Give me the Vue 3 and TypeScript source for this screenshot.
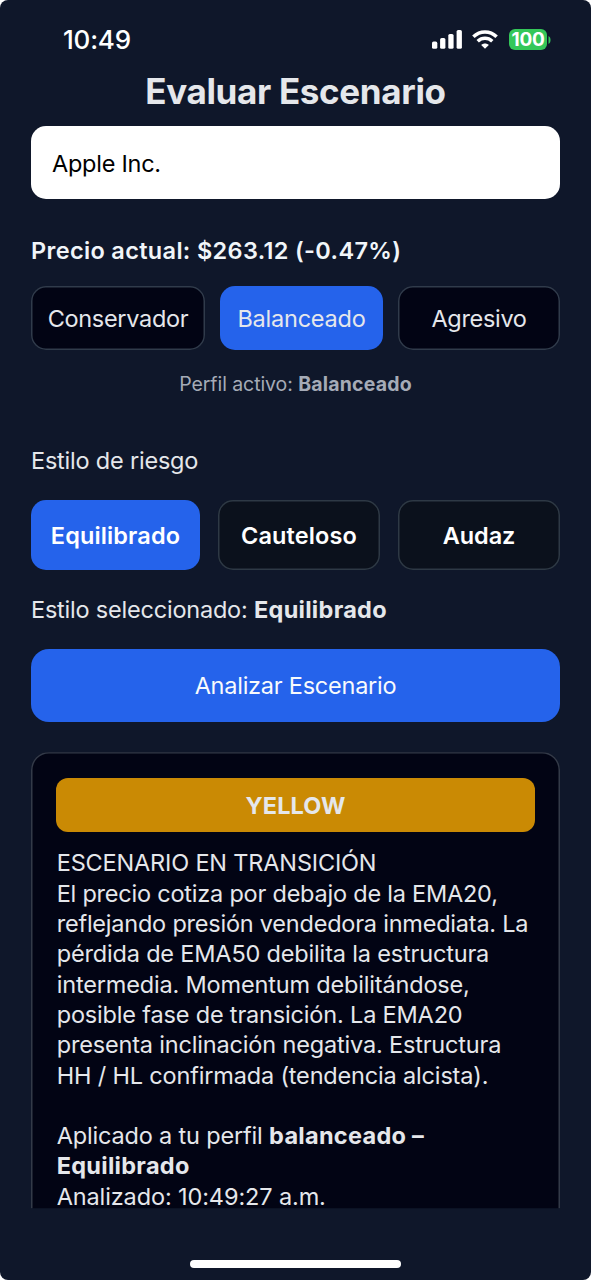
<script setup lang="ts">
import { ref } from 'vue'

interface Option {
  label: string
  key: string
}

const company = ref<string>('Apple Inc.')
const profiles: Option[] = [
  { label: 'Conservador', key: 'conservador' },
  { label: 'Balanceado', key: 'balanceado' },
  { label: 'Agresivo', key: 'agresivo' },
]
const styles: Option[] = [
  { label: 'Equilibrado', key: 'equilibrado' },
  { label: 'Cauteloso', key: 'cauteloso' },
  { label: 'Audaz', key: 'audaz' },
]
const profile = ref<string>('Balanceado')
const riskStyle = ref<string>('Equilibrado')

const summary: string[] = [
  'ESCENARIO EN TRANSICIÓN',
  'El precio cotiza por debajo de la EMA20,',
  'reflejando presión vendedora inmediata. La',
  'pérdida de EMA50 debilita la estructura',
  'intermedia. Momentum debilitándose,',
  'posible fase de transición. La EMA20',
  'presenta inclinación negativa. Estructura',
  'HH / HL confirmada (tendencia alcista).',
]
</script>

<template>
  <div class="device">
    <main class="screen">
      <header class="status">
        <span class="time">10:49</span>
        <div class="indicators">
          <svg class="signal" width="30" height="19" viewBox="0 0 30 19" fill="#fff">
            <rect x="0" y="11.6" width="5.3" height="7.2" rx="1.6" />
            <rect x="8.1" y="8" width="5.3" height="10.8" rx="1.6" />
            <rect x="16.3" y="4" width="5.3" height="14.8" rx="1.6" />
            <rect x="24.6" y="0" width="5.3" height="18.8" rx="1.6" />
          </svg>
          <svg class="wifi" width="26" height="19" viewBox="0 0 26 19" fill="none" stroke="#fff">
            <path d="M1.4 6.7C8 .4 18 .4 24.6 6.7" stroke-width="3.6" />
            <path d="M5.7 11.2C10 7.3 16 7.3 20.3 11.2" stroke-width="3.5" />
            <path d="M13 18.8 9.2 14.9C11.3 12.9 14.7 12.9 16.8 14.9Z" fill="#fff" stroke="none" />
          </svg>
          <div class="battery"><span>100</span></div>
          <svg class="nub" width="3" height="8" viewBox="0 0 3 8"><path d="M.5 0C3.2 1.3 3.2 6.7.5 8Z" fill="#34c759" /></svg>
        </div>
      </header>

      <h1 class="title">Evaluar Escenario</h1>
      <div class="field"><span class="company">{{ company }}</span></div>
      <p class="price">Precio actual: $263.12 (-0.47%)</p>

      <div class="profiles">
        <button
          v-for="item in profiles"
          :key="item.key"
          :class="['chip', item.key, { active: item.label === profile }]"
          @click="profile = item.label"
        ><span>{{ item.label }}</span></button>
      </div>
      <p class="profile-note">Perfil activo: <b>{{ profile }}</b></p>

      <p class="style-label">Estilo de riesgo</p>
      <div class="styles">
        <button
          v-for="item in styles"
          :key="item.key"
          :class="['option', item.key, { active: item.label === riskStyle }]"
          @click="riskStyle = item.label"
        ><span>{{ item.label }}</span></button>
      </div>
      <p class="style-note">Estilo seleccionado: <b>{{ riskStyle }}</b></p>

      <button class="analyze"><span>Analizar Escenario</span></button>

      <section class="card">
        <div class="badge"><span>YELLOW</span></div>
        <div class="report">
          <p v-for="(line, i) in summary" :key="i" :class="['line', { tight: i === 1 || i === 2 }]">{{ line }}</p>
          <p class="line gap">Aplicado a tu perfil <b>balanceado –</b></p>
          <p class="line"><b>Equilibrado</b></p>
          <p class="line analyzed">Analizado: 10:49:27 a.m.</p>
        </div>
      </section>
      <footer class="bottom"><div class="home"></div></footer>
    </main>
  </div>
</template>

<style>
html,
body {
  margin: 0;
  background: #fff;
  overflow: hidden;
}
</style>

<style scoped>
* {
  box-sizing: border-box;
}
.device {
  width: 591px;
  height: 1280px;
  background: #fff;
}
.screen {
  display: flex;
  flex-direction: column;
  width: 591px;
  height: 1280px;
  padding: 0 31px;
  overflow: hidden;
  border-radius: 8px;
  background: #0f172a;
  color: #e5e7eb;
  font-family: Inter, 'Liberation Sans', sans-serif;
  font-size: 23.5px;
  line-height: 30.3px;
  letter-spacing: -0.21px;
  white-space: nowrap;
}
p,
h1 {
  margin: 0;
}
button {
  display: flex;
  align-items: center;
  justify-content: center;
  margin: 0;
  padding: 0;
  border: 0;
  color: inherit;
  font: inherit;
  letter-spacing: inherit;
}
b {
  font-weight: 700;
  letter-spacing: 0.29px;
}
.status {
  display: flex;
  flex: none;
  align-items: center;
  justify-content: space-between;
  height: 74px;
  padding: 5px 9px 0 32px;
  color: #fff;
}
.time {
  padding-top: 1px;
  font-size: 26px;
  font-weight: 550;
  letter-spacing: -0.2px;
}
.indicators {
  display: flex;
  align-items: center;
}
.signal {
  margin-right: -1px;
}
.wifi {
  margin-left: 11px;
}
.battery {
  display: flex;
  align-items: center;
  justify-content: center;
  width: 38px;
  height: 21px;
  margin-left: 11px;
  border-radius: 6px;
  background: #34c759;
  font-size: 19px;
  font-weight: 650;
  line-height: 21px;
}
.nub {
  margin-left: 1px;
}
.title {
  flex: none;
  height: 34px;
  color: #e5e7eb;
  font-size: 35px;
  font-weight: 700;
  line-height: 34px;
  letter-spacing: -0.34px;
  text-align: center;
}
.field {
  flex: none;
  height: 73px;
  margin-top: 17.5px;
  padding-left: 21px;
  border-radius: 15px;
  background: #fff;
  color: #000;
  line-height: 75px;
  letter-spacing: -0.25px;
}
.price {
  flex: none;
  height: 30px;
  margin-top: 37.5px;
  color: #f1f5f9;
  font-weight: 600;
  line-height: 30px;
  letter-spacing: 0.34px;
}
.profiles {
  display: grid;
  flex: none;
  grid-template-columns: 174px 163px 162px;
  justify-content: space-between;
  height: 64px;
  margin-top: 20px;
}
.chip {
  padding-top: 2px;
  border-radius: 15px;
  background: #020414;
  box-shadow: inset 0 0 0 1.5px #303b4b;
  letter-spacing: -0.31px;
}
.chip.active,
.option.active {
  background: #2563eb;
  box-shadow: none;
}
.balanceado {
  letter-spacing: -0.22px;
}
.profile-note {
  flex: none;
  height: 30px;
  margin-top: 19px;
  color: #a5abb7;
  font-size: 19.5px;
  line-height: 30px;
  letter-spacing: -0.07px;
  text-align: center;
}
.profile-note b {
  letter-spacing: 0.18px;
}
.style-label {
  flex: none;
  height: 30px;
  margin-top: 47px;
  line-height: 30px;
}
.styles {
  display: grid;
  flex: none;
  grid-template-columns: 169px 162px 162px;
  justify-content: space-between;
  height: 70px;
  margin-top: 24px;
}
.option {
  padding-top: 2px;
  border-radius: 15px;
  background: #0b111c;
  box-shadow: inset 0 0 0 1.5px #2e3945;
  color: #fff;
  font-weight: 600;
  letter-spacing: 0.13px;
}
.audaz {
  letter-spacing: -0.05px;
}
.style-note {
  flex: none;
  height: 30px;
  margin-top: 25px;
  line-height: 30px;
}
.analyze {
  flex: none;
  height: 73.3px;
  margin-top: 23.7px;
  padding-top: 2px;
  border-radius: 18px;
  background: #2563eb;
  color: #f8fafc;
  letter-spacing: -0.24px;
}
.card {
  position: relative;
  z-index: 0;
  flex: none;
  height: 456px;
  margin-top: 30.2px;
  padding: 25.8px 25px 0;
}
.card::before {
  content: '';
  position: absolute;
  z-index: -1;
  inset: 0 0 -30px;
  border-radius: 18px;
  background: #020414;
  box-shadow: inset 0 0 0 1.5px #333a48;
  clip-path: inset(0 0 30px);
}
.badge {
  height: 54px;
  border-radius: 12px;
  background: #ca8a04;
  font-weight: 700;
  line-height: 56px;
  text-align: center;
  letter-spacing: 0.1px;
}
.report {
  padding: 16.5px 0 0 0.7px;
  letter-spacing: -0.17px;
}
.line {
  height: 30.3px;
}
.tight {
  letter-spacing: -0.22px;
}
.gap {
  margin-top: 30.3px;
}
.analyzed {
  height: 25px;
  padding-top: 2px;
  line-height: 25px;
  letter-spacing: -0.12px;
}
.bottom {
  display: flex;
  flex: 1;
  justify-content: center;
  padding-top: 51.8px;
}
.home {
  width: 211px;
  height: 8px;
  border-radius: 4px;
  background: #fff;
}
</style>
